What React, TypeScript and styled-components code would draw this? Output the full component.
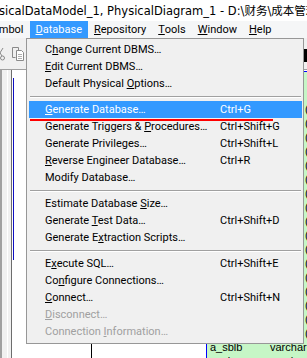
import React from 'react';
import styled, { createGlobalStyle } from 'styled-components';

const GlobalStyle = createGlobalStyle`
  html, body { margin: 0; padding: 0; background: #fff; }
  body { width: 307px; height: 358px; overflow: hidden; }
  * { box-sizing: border-box; }
`;

const Window = styled.div`
  position: relative;
  width: 307px;
  height: 358px;
  overflow: hidden;
  display: flex;
  flex-direction: column;
  font-family: Roboto, "Liberation Sans", sans-serif;
  font-size: 11px;
  color: #000;
  background: #fff;
`;

const TitleBar = styled.div`
  flex: none;
  height: 21px;
  display: flex;
  align-items: center;
  background: #fff;
  font-family: "DejaVu Sans", "Noto Sans CJK SC", sans-serif;
  font-size: 11.5px;
  white-space: nowrap;
  overflow: hidden;
`;

const TitleText = styled.span`
  margin-left: -1px;
  margin-top: -2px;
`;

const MenuBar = styled.div`
  flex: none;
  height: 17px;
  display: flex;
  background: #f5f6f7;
  white-space: nowrap;
  overflow: hidden;
`;

const MenuTitle = styled.div<{ $active?: boolean; $shift?: number }>`
  display: flex;
  align-items: center;
  padding: 0 6px;
  margin-left: ${(p) => p.$shift ?? 0}px;
  background: ${(p) => (p.$active ? '#3399ff' : 'transparent')};
  color: ${(p) => (p.$active ? '#fff' : '#000')};
`;

const Key = styled.span`
  text-decoration: underline;
  text-underline-offset: 1px;
`;

const Workspace = styled.div`
  flex: 1;
  display: flex;
  flex-direction: column;
  min-height: 0;
`;

const Toolbar = styled.div`
  flex: none;
  height: 32px;
  display: flex;
  align-items: center;
  justify-content: space-between;
  background: #f0f0f0;
  border-bottom: 1px solid #a0a0a0;
  overflow: hidden;
`;

const ToolGroup = styled.div<{ $offset: number }>`
  display: flex;
  align-items: center;
  gap: 6px;
  margin-left: ${(p) => p.$offset}px;
`;

const ToolIcon = styled.svg`
  display: block;
  flex: none;
`;

const EdgeIcon = styled.svg`
  display: block;
  flex: none;
  margin-right: -5px;
  margin-top: 4px;
`;

const Body = styled.div`
  flex: 1;
  display: flex;
  min-height: 0;
`;

const Sidebar = styled.div`
  flex: none;
  width: 12px;
  background: linear-gradient(
    to right,
    #a0a0a0 0 2px,
    #f0f0f0 2px 7px,
    #ffffff 7px 8px,
    #f0f0f0 8px 11px,
    #6d6d6d 11px 12px
  );
`;

const Canvas = styled.div`
  flex: 1;
  display: flex;
  background: #fff;
  padding-left: 1px;
`;

const TreeEdge = styled.div`
  flex: none;
  width: 1px;
  height: 182px;
  margin-top: 8px;
  background: #1010c0;
`;

const Diagram = styled.div`
  position: relative;
  flex: 1;
  overflow: hidden;
`;

const Link = styled.div`
  position: absolute;
  left: 77px;
  top: 240px;
  bottom: 0;
  width: 1px;
  background: #000;
`;

const Table = styled.div`
  position: absolute;
  left: 192px;
  top: 1px;
  width: 200px;
  height: 320px;
  background: #c6f6c6;
  border: 1px solid #0000ff;
  padding-top: 30px;
`;

const Row = styled.div`
  display: flex;
  height: 14px;
  align-items: center;
  padding-left: 3px;
  font-family: "Liberation Sans", sans-serif;
  font-size: 11px;
  color: #000;
  white-space: nowrap;
`;

const ColName = styled.span`
  flex: none;
  width: 60px;
`;

const ColType = styled.span<{ $covered?: boolean }>`
  padding-left: ${(p) => (p.$covered ? 35 : 0)}px;
`;

const Menu = styled.div`
  position: absolute;
  left: 26px;
  top: 38px;
  width: 278px;
  background: #f0f0f0;
  border: 1px solid #979797;
  padding: 2px 1px 3px 2px;
  white-space: nowrap;
`;

const Item = styled.div<{ $selected?: boolean; $disabled?: boolean }>`
  display: grid;
  grid-template-columns: 175px auto;
  align-items: center;
  height: 17px;
  padding-left: 16px;
  background: ${(p) => (p.$selected ? '#3399ff' : 'transparent')};
  color: ${(p) => (p.$selected ? '#fff' : p.$disabled ? '#a0a0a0' : '#000')};
`;

const Label = styled.span`
  justify-self: start;
`;

const Shortcut = styled.span`
  grid-column: 2;
  justify-self: start;
`;

const Separator = styled.div`
  height: 9px;
  padding: 4px 1px 0;
  &::after {
    content: '';
    display: block;
    border-top: 1px solid #a0a0a0;
    border-bottom: 1px solid #ffffff;
  }
`;

const Annotation = styled.div`
  position: absolute;
  left: 3px;
  top: 80px;
  width: 243px;
  height: 2px;
  background: #ff0000;
`;

type Entry =
  | { sep: true }
  | { sep?: false; pre: string; key?: string; post?: string; shortcut?: string; selected?: boolean; disabled?: boolean };

const entries: Entry[] = [
  { pre: 'C', key: 'h', post: 'ange Current DBMS…' },
  { pre: '', key: 'E', post: 'dit Current DBMS…' },
  { pre: 'Default Physical ', key: 'O', post: 'ptions…' },
  { sep: true },
  { pre: '', key: 'G', post: 'enerate Database…', shortcut: 'Ctrl+G', selected: true },
  { pre: 'Generate Triggers & ', key: 'P', post: 'rocedures…', shortcut: 'Ctrl+Shift+G' },
  { pre: 'Generate Privileges…', shortcut: 'Ctrl+Shift+L' },
  { pre: '', key: 'R', post: 'everse Engineer Database…', shortcut: 'Ctrl+R' },
  { pre: 'Modify Database…' },
  { sep: true },
  { pre: 'Estimate Database ', key: 'S', post: 'ize…' },
  { pre: 'Generate ', key: 'T', post: 'est Data…', shortcut: 'Ctrl+Shift+D' },
  { pre: 'Generate E', key: 'x', post: 'traction Scripts…' },
  { sep: true },
  { pre: 'E', key: 'x', post: 'ecute SQL…', shortcut: 'Ctrl+Shift+E' },
  { pre: 'Co', key: 'n', post: 'figure Connections…' },
  { pre: '', key: 'C', post: 'onnect…', shortcut: 'Ctrl+Shift+N' },
  { pre: '', key: 'D', post: 'isconnect…', disabled: true },
  { pre: 'Connection ', key: 'I', post: 'nformation…', disabled: true },
];

/* Rows of the table behind the open menu: only the last glyph of the type
   column shows at the window's right edge, so covered rows carry just that. */
const rows = Array.from({ length: 19 }, (_, i) =>
  i === 17
    ? { name: 'a_sblb', type: 'varchar(20)', covered: false }
    : i === 18
      ? { name: 'a_sbmc', type: 'varchar(50)', covered: false }
      : { name: '', type: '(', covered: true }
);

export default function App() {
  return (
    <>
      <GlobalStyle />
      <Window>
        <TitleBar>
          <TitleText>{'sicalDataModel_1, PhysicalDiagram_1 - D:\\财务\\成本管理'}</TitleText>
        </TitleBar>
        <MenuBar>
          <MenuTitle $shift={-19}>Symbol</MenuTitle>
          <MenuTitle $active>
            <Key>D</Key>atabase
          </MenuTitle>
          <MenuTitle>
            <Key>R</Key>epository
          </MenuTitle>
          <MenuTitle>
            <Key>T</Key>ools
          </MenuTitle>
          <MenuTitle>
            <Key>W</Key>indow
          </MenuTitle>
          <MenuTitle>
            <Key>H</Key>elp
          </MenuTitle>
        </MenuBar>
        <Workspace>
          <Toolbar>
            <ToolGroup $offset={-6}>
              <ToolIcon width="12" height="14" viewBox="0 0 12 14">
                <path d="M3 1 L8 9 M9 1 L4 9" stroke="#8a8a8a" strokeWidth="1" fill="none" />
                <circle cx="3.5" cy="11" r="2" stroke="#8a8a8a" fill="none" />
                <circle cx="8.5" cy="11" r="2" stroke="#8a8a8a" fill="none" />
              </ToolIcon>
              <ToolIcon width="12" height="14" viewBox="0 0 12 14">
                <path d="M0.5 0.5 H6.5 V3.5 M0.5 0.5 V10.5 H3.5" stroke="#8a8a8a" fill="none" />
                <path d="M4.5 3.5 H9.5 L11.5 5.5 V13.5 H4.5 Z" stroke="#8a8a8a" fill="#fff" />
                <path d="M6 7.5 H10 M6 9.5 H10 M6 11.5 H10" stroke="#b0b0b0" />
              </ToolIcon>
            </ToolGroup>
            <EdgeIcon width="8" height="13" viewBox="0 0 8 13">
              <rect x="0" y="0" width="8" height="13" fill="#000" />
            </EdgeIcon>
          </Toolbar>
          <Body>
            <Sidebar />
            <Canvas>
              <TreeEdge />
              <Diagram>
                <Link />
                <Table>
                  {rows.map((r, i) => (
                    <Row key={i}>
                      <ColName>{r.name}</ColName>
                      <ColType $covered={r.covered}>{r.type}</ColType>
                    </Row>
                  ))}
                </Table>
              </Diagram>
            </Canvas>
          </Body>
        </Workspace>
        <Menu>
          {entries.map((e, i) =>
            e.sep ? (
              <Separator key={i} />
            ) : (
              <Item key={i} $selected={e.selected} $disabled={e.disabled}>
                <Label>
                  {e.pre}
                  {e.key && <Key>{e.key}</Key>}
                  {e.post}
                </Label>
                {e.shortcut && <Shortcut>{e.shortcut}</Shortcut>}
              </Item>
            )
          )}
          <Annotation />
        </Menu>
      </Window>
    </>
  );
}
